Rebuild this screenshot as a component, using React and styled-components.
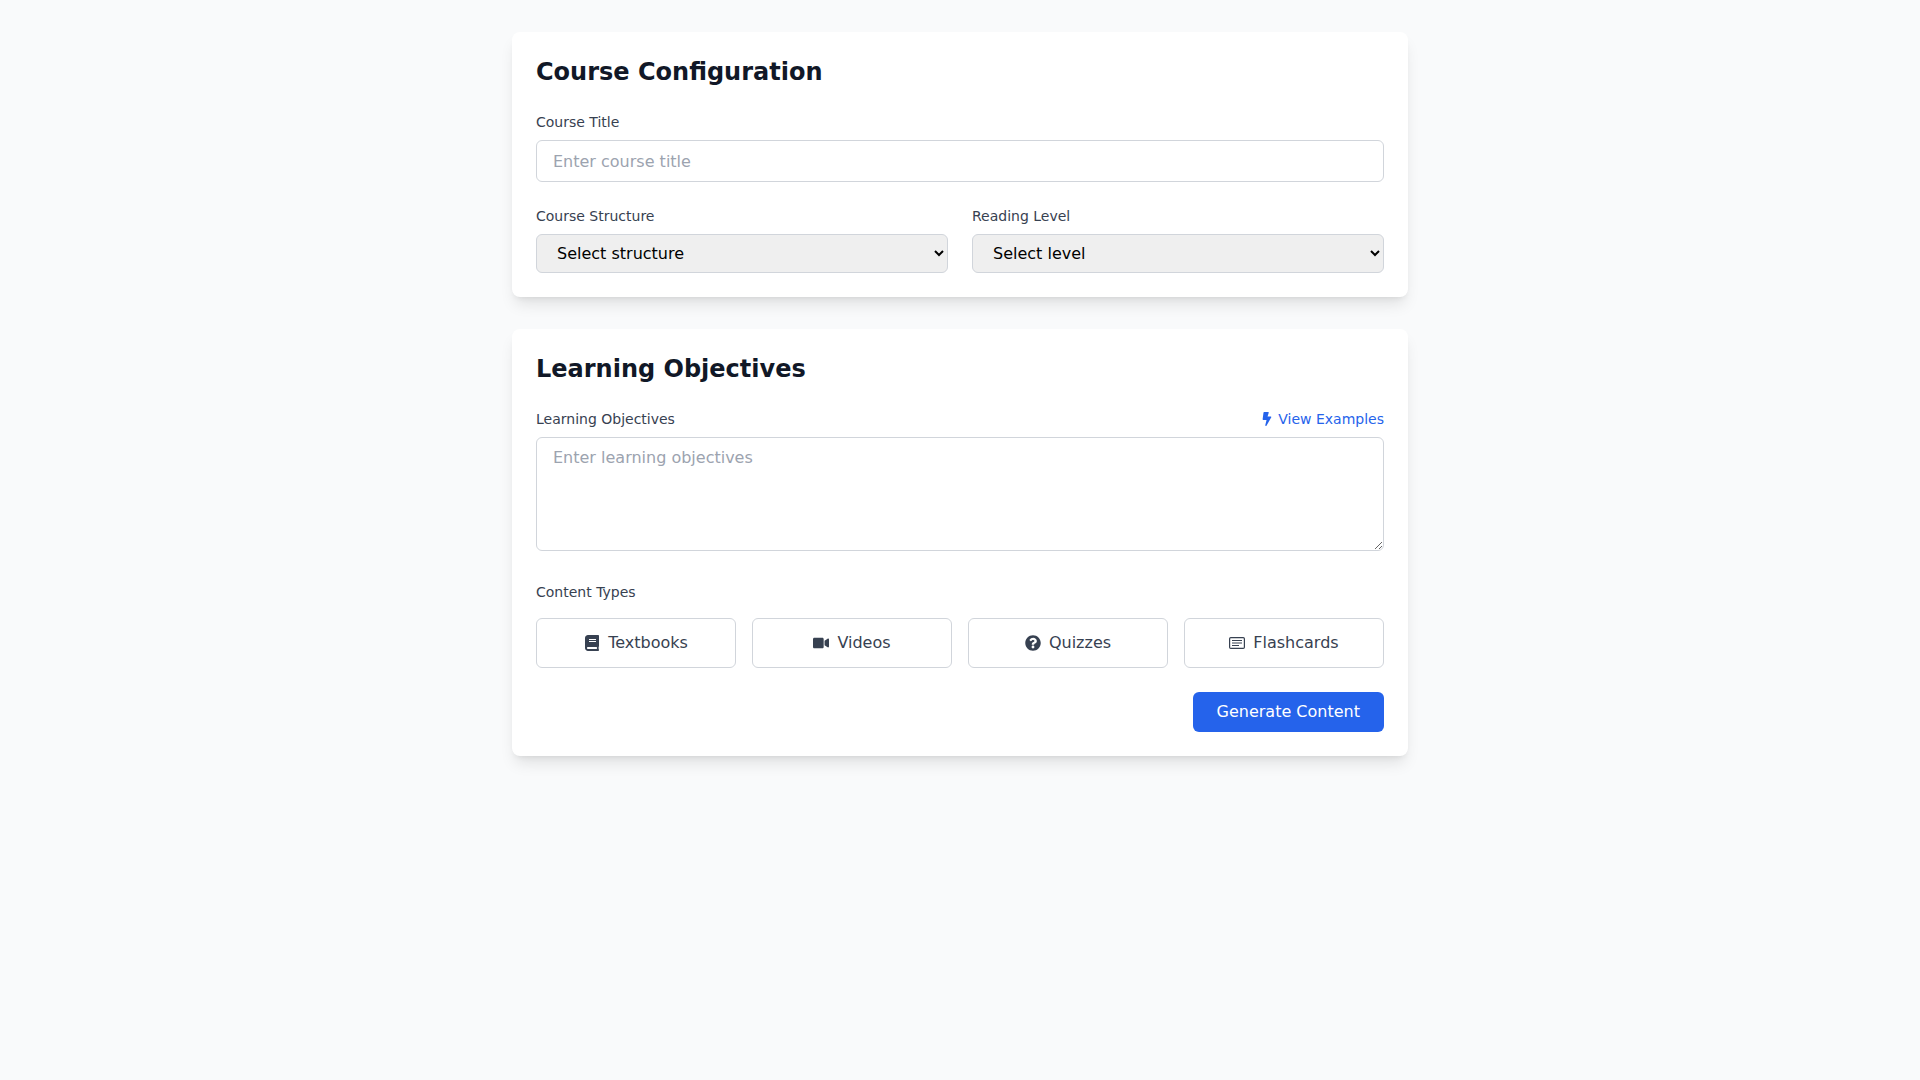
import React from "react";
import styled, { createGlobalStyle } from "styled-components";
import { FaBook, FaVideo, FaQuestionCircle, FaBolt } from "react-icons/fa";

const Global = createGlobalStyle`
  * { box-sizing: border-box; }
  html, body { margin: 0; padding: 0; }
  body {
    background: #f9fafb;
    font-family: "DejaVu Sans", sans-serif;
    line-height: 1.5;
    min-height: 100vh;
  }
`;

const Page = styled.div`
  width: 896px;
  margin: 0 auto;
  padding-top: 32px;
  display: flex;
  flex-direction: column;
  gap: 32px;
`;

const Card = styled.section`
  background: #fff;
  border-radius: 8px;
  padding: 24px;
  box-shadow: 0 10px 15px -3px rgba(0, 0, 0, 0.1), 0 4px 6px -4px rgba(0, 0, 0, 0.1);
`;

const Title = styled.h2`
  margin: 0 0 24px;
  font-size: 24px;
  line-height: 32px;
  font-weight: 700;
  color: #111827;
`;

const Field = styled.div`
  margin-bottom: ${(p) => p.$mb ?? 0}px;
`;

const Label = styled.label`
  display: block;
  font-size: 14px;
  line-height: 20px;
  font-weight: 400;
  color: #374151;
  margin-bottom: 8px;
`;

const LabelRow = styled.div`
  display: flex;
  justify-content: space-between;
  align-items: center;
  margin-bottom: 8px;
  ${Label} { margin-bottom: 0; }
`;

const LinkButton = styled.button`
  display: inline-flex;
  align-items: center;
  gap: 4px;
  padding: 0;
  border: 0;
  background: none;
  font: inherit;
  font-size: 14px;
  line-height: 20px;
  color: #2563eb;
  svg { width: 14px; height: 14px; }
`;

const TextInput = styled.input`
  display: block;
  width: 100%;
  height: 42px;
  padding: 8px 16px;
  border: 1px solid #d1d5db;
  border-radius: 6px;
  background: #fff;
  font: inherit;
  font-size: 16px;
  color: #111827;
  &::placeholder { color: #9ca3af; opacity: 1; }
`;

const TextArea = styled.textarea`
  display: block;
  width: 100%;
  height: 114px;
  padding: 8px 16px;
  border: 1px solid #d1d5db;
  border-radius: 6px;
  background: #fff;
  font: inherit;
  font-size: 16px;
  color: #111827;
  &::placeholder { color: #9ca3af; opacity: 1; }
`;

const TwoCols = styled.div`
  display: grid;
  grid-template-columns: 1fr 1fr;
  gap: 24px;
`;

const Select = styled.select`
  display: block;
  width: 100%;
  height: 39px;
  padding: 8px 16px;
  border: 1px solid #d1d5db;
  border-radius: 6px;
  font-family: inherit;
  font-size: 16px;
  color: #000;
`;

const TypeGrid = styled.div`
  display: grid;
  grid-template-columns: repeat(4, 1fr);
  gap: 16px;
  margin-top: 16px;
`;

const TypeButton = styled.button`
  display: flex;
  align-items: center;
  justify-content: center;
  gap: 8px;
  height: 50px;
  border: 1px solid #d1d5db;
  border-radius: 6px;
  background: #fff;
  font: inherit;
  font-size: 16px;
  color: #374151;
  svg { width: 16px; height: 16px; }
`;

const Actions = styled.div`
  display: flex;
  justify-content: flex-end;
  margin-top: 24px;
`;

const Primary = styled.button`
  height: 40px;
  padding: 0 24px;
  border: 0;
  border-radius: 6px;
  background: #2563eb;
  color: #fff;
  font: inherit;
  font-size: 16px;
`;

const CardsIcon = () => (
  <svg viewBox="0 0 16 16" fill="none" stroke="currentColor" aria-hidden="true">
    <rect x="0.6" y="2.6" width="14.8" height="10.8" rx="1.2" strokeWidth="1.2" />
    <path d="M3 5.5h10M3 8h10M3 10.5h7" strokeWidth="1" />
  </svg>
);

export default function App() {
  return (
    <>
      <Global />
      <Page>
        <Card>
          <Title>Course Configuration</Title>
          <Field $mb={24}>
            <Label>Course Title</Label>
            <TextInput placeholder="Enter course title" />
          </Field>
          <TwoCols>
            <Field>
              <Label>Course Structure</Label>
              <Select><option>Select structure</option></Select>
            </Field>
            <Field>
              <Label>Reading Level</Label>
              <Select><option>Select level</option></Select>
            </Field>
          </TwoCols>
        </Card>
        <Card>
          <Title>Learning Objectives</Title>
          <Field $mb={31}>
            <LabelRow>
              <Label>Learning Objectives</Label>
              <LinkButton><FaBolt />View Examples</LinkButton>
            </LabelRow>
            <TextArea placeholder="Enter learning objectives" />
          </Field>
          <Field>
            <Label>Content Types</Label>
            <TypeGrid>
              <TypeButton><FaBook />Textbooks</TypeButton>
              <TypeButton><FaVideo />Videos</TypeButton>
              <TypeButton><FaQuestionCircle />Quizzes</TypeButton>
              <TypeButton><CardsIcon />Flashcards</TypeButton>
            </TypeGrid>
          </Field>
          <Actions>
            <Primary>Generate Content</Primary>
          </Actions>
        </Card>
      </Page>
    </>
  );
}
